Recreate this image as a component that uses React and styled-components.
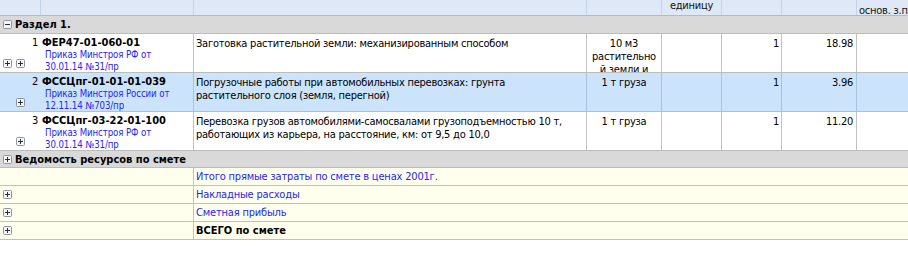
import React from "react";
import styled, { createGlobalStyle, css } from "styled-components";

const Global = createGlobalStyle`
  * { box-sizing: border-box; }
  html, body { margin: 0; padding: 0; background: #fff; }
  body {
    font-family: "DejaVu Sans Condensed", "DejaVu Sans", sans-serif;
    font-size: 11px;
    letter-spacing: -0.24px;
    color: #000;
  }
`;

const COLS = "41px 153px 393px 75px 60px 60px 75px 1fr";

const Grid = styled.div`
  width: 908px;
  display: flex;
  flex-direction: column;
`;

const HeaderRow = styled.div`
  display: grid;
  grid-template-columns: ${COLS};
  height: 16px;
  background: #dfe8f6;
  border-bottom: 1px solid #a9bcd3;
`;

const HeadCell = styled.div`
  border-right: ${(p) => (p.$last ? "none" : "1px solid #c4d3e6")};
  overflow: hidden;
  text-align: ${(p) => p.$align || "left"};
  padding: ${(p) => p.$top || 0}px 2px 0 2px;
  line-height: 12px;
  white-space: nowrap;
  color: #111;
`;

const GroupRow = styled.div`
  display: flex;
  align-items: center;
  gap: 3px;
  height: ${(p) => p.$h}px;
  padding-left: 3px;
  background: #d9d9d9;
  border-bottom: 1px solid #bcbcbc;
  font-weight: bold;
  font-size: ${(p) => p.$fs || 11}px;
  letter-spacing: ${(p) => p.$ls || 0}px;
`;

const variants = {
  plain: css`
    background: #fff;
    --sep: #c2c2c2;
  `,
  selected: css`
    background: #cce4fb;
    --sep: #a8c3de;
  `,
};

const ItemRow = styled.div`
  display: grid;
  grid-template-columns: ${COLS};
  height: 39px;
  border-bottom: 1px solid #bdbdbd;
  ${(p) => variants[p.$variant || "plain"]}
`;

const Cell = styled.div`
  border-right: ${(p) => (p.$noSep ? "none" : "1px solid var(--sep)")};
  overflow: hidden;
  padding: 3px ${(p) => p.$pr ?? 2}px 0 ${(p) => p.$pl ?? 2}px;
  text-align: ${(p) => p.$align || "left"};
  line-height: 13px;
`;

const NumCell = styled.div`
  display: flex;
  flex-direction: column;
  justify-content: space-between;
  padding: 3px 3px 4px 3px;
  overflow: hidden;
`;

const Num = styled.div`
  text-align: right;
  line-height: 12px;
`;

const Icons = styled.div`
  display: flex;
  gap: 4px;
  padding-left: ${(p) => p.$pl || 0}px;
`;

const Code = styled.div`
  font-weight: bold;
  line-height: 12px;
  letter-spacing: 0;
  white-space: nowrap;
`;

const Doc = styled.div`
  color: #2626f5;
  font-size: 9.6px;
  letter-spacing: -0.1px;
  line-height: 11.5px;
  padding-left: 3px;
`;

const SummaryRow = styled.div`
  display: grid;
  grid-template-columns: 194px 1fr;
  height: 18px;
  background: #ffffee;
  border-bottom: 1px solid #c0c0c0;
`;

const SumLeft = styled.div`
  border-right: 1px solid #c2c2c2;
  display: flex;
  align-items: center;
  padding-left: 3px;
`;

const SumText = styled.div`
  display: flex;
  align-items: center;
  padding-left: 2px;
  color: ${(p) => (p.$bold ? "#000" : "#2626f5")};
  font-weight: ${(p) => (p.$bold ? "bold" : "normal")};
  letter-spacing: ${(p) => (p.$bold ? "0" : "-0.18px")};
  white-space: nowrap;
`;

const TreeIcon = ({ minus }) => (
  <svg width="9" height="9" viewBox="0 0 9 9" style={{ display: "block", flex: "none" }}>
    <rect x="0.5" y="0.5" width="8" height="8" rx="1" fill="#f6f6f6" stroke="#8d949c" />
    <path d="M2 4.5h5" stroke="#2a2f36" />
    {!minus && <path d="M4.5 2v5" stroke="#2a2f36" />}
  </svg>
);

const items = [
  {
    n: 1,
    code: "ФЕР47-01-060-01",
    doc: ["Приказ Минстроя РФ от", "30.01.14 №31/пр"],
    desc: ["Заготовка растительной земли: механизированным способом"],
    unit: ["10 м3", "растительно", "й земли и"],
    qty: "1",
    price: "18.98",
    icons: 2,
  },
  {
    n: 2,
    code: "ФССЦпг-01-01-01-039",
    doc: ["Приказ Минстроя России от", "12.11.14 №703/пр"],
    desc: ["Погрузочные работы при автомобильных перевозках: грунта", "растительного слоя (земля, перегной)"],
    unit: ["1 т груза"],
    qty: "1",
    price: "3.96",
    icons: 1,
    variant: "selected",
  },
  {
    n: 3,
    code: "ФССЦпг-03-22-01-100",
    doc: ["Приказ Минстроя РФ от", "30.01.14 №31/пр"],
    desc: [
      "Перевозка грузов автомобилями-самосвалами грузоподъемностью 10 т,",
      "работающих из карьера, на расстояние, км: от 9,5 до 10,0",
    ],
    unit: ["1 т груза"],
    qty: "1",
    price: "11.20",
    icons: 1,
  },
];

const Lines = ({ lines }) =>
  lines.map((l, i) => (
    <React.Fragment key={i}>
      {l}
      {i < lines.length - 1 && <br />}
    </React.Fragment>
  ));

export default function App() {
  return (
    <>
      <Global />
      <Grid>
        <HeaderRow>
          <HeadCell />
          <HeadCell />
          <HeadCell />
          <HeadCell />
          <HeadCell $align="center" $top={0}>единицу</HeadCell>
          <HeadCell />
          <HeadCell />
          <HeadCell $last $top={5}>основ. з.п</HeadCell>
        </HeaderRow>
        <GroupRow $h={18}>
          <TreeIcon minus />
          <span>Раздел 1.</span>
        </GroupRow>
        {items.map((it) => (
          <ItemRow key={it.n} $variant={it.variant}>
            <NumCell>
              <Num>{it.n}</Num>
              <Icons $pl={it.icons === 1 ? 13 : 0}>
                {Array.from({ length: it.icons }).map((_, i) => (
                  <TreeIcon key={i} />
                ))}
              </Icons>
            </NumCell>
            <Cell $pl={1}>
              <Code>{it.code}</Code>
              <Doc>
                <Lines lines={it.doc} />
              </Doc>
            </Cell>
            <Cell>
              <Lines lines={it.desc} />
            </Cell>
            <Cell $align="center" $pl={1} $pr={1}>
              <Lines lines={it.unit} />
            </Cell>
            <Cell />
            <Cell $align="right" $pr={2}>{it.qty}</Cell>
            <Cell $align="right" $pr={3}>{it.price}</Cell>
            <Cell $noSep />
          </ItemRow>
        ))}
        <GroupRow $h={17}>
          <TreeIcon />
          <span>Ведомость ресурсов по смете</span>
        </GroupRow>
        <SummaryRow>
          <SumLeft />
          <SumText>Итого прямые затраты по смете в ценах 2001г.</SumText>
        </SummaryRow>
        <SummaryRow>
          <SumLeft>
            <TreeIcon />
          </SumLeft>
          <SumText>Накладные расходы</SumText>
        </SummaryRow>
        <SummaryRow>
          <SumLeft>
            <TreeIcon />
          </SumLeft>
          <SumText>Сметная прибыль</SumText>
        </SummaryRow>
        <SummaryRow>
          <SumLeft>
            <TreeIcon />
          </SumLeft>
          <SumText $bold>ВСЕГО по смете</SumText>
        </SummaryRow>
      </Grid>
    </>
  );
}
